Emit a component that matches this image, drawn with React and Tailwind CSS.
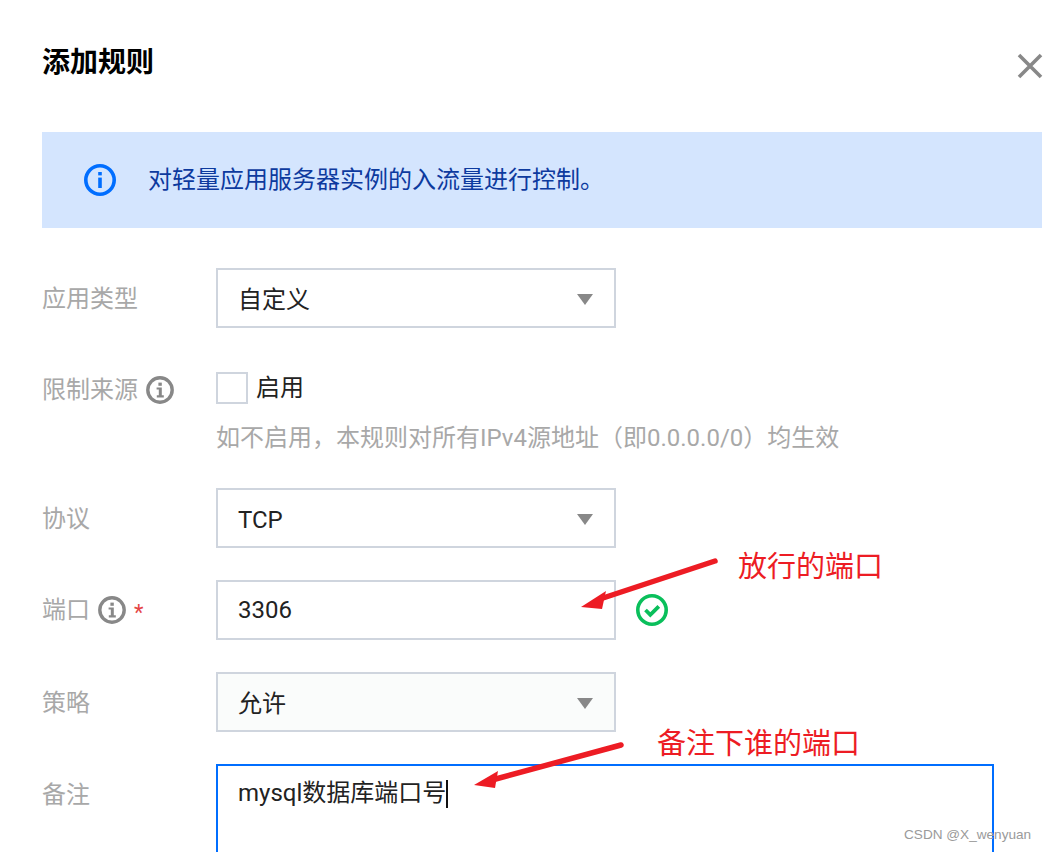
function Info({ className = "" }) {
  return (
    <svg viewBox="0 0 28 28" className={"w-7 h-7 shrink-0 " + className} fill="none">
      <circle cx="14" cy="14" r="12.2" stroke="#888888" strokeWidth="3.4" />
      <rect x="12.4" y="6.6" width="3.4" height="3.2" fill="#888888" />
      <path d="M10.6 11.4h5.2v7.8h2v2.2h-7v-2.2h2v-5.6h-2.2z" fill="#888888" />
    </svg>
  );
}
function Caret() {
  return (
    <svg viewBox="0 0 16 12" className="w-4 h-3 absolute right-[21px] top-[24px]">
      <path d="M0 0h16l-8 11z" fill="#888888" />
    </svg>
  );
}
function Label({ children }) {
  return <div className="w-[174px] shrink-0 flex items-center h-[60px] pt-[2px] text-[24px] leading-[36px] text-[#a8a8a8]">{children}</div>;
}
function Select({ children, bg = "bg-white" }) {
  return (
    <div className={"relative w-[400px] h-[60px] border-2 border-[#cfd5de] flex items-center pl-[20px] pt-[4px] text-[24px] text-[#222222] " + bg}>
      {children}
      <Caret />
    </div>
  );
}
export default function App() {
  return (
    <div className="relative w-[1046px] h-[852px] overflow-hidden bg-white font-['Roboto','Noto_Sans_CJK_SC',sans-serif]">
      <div className="pl-[42px] pt-[42px]">
        <div className="flex justify-between h-[90px]">
          <h1 className="text-[28px] leading-[42px] font-bold text-black">添加规则</h1>
          <svg viewBox="0 0 26 26" className="w-[26px] h-[26px] mt-[11px] mr-[3px]" stroke="#888888" strokeWidth="3.6" fill="none">
            <path d="M2 2l22 22M24 2L2 24" />
          </svg>
        </div>
        <div className="w-[1000px] h-[96px] bg-[#d4e5fe] flex items-center pl-[42px] gap-[32px] mb-[40px]">
          <svg viewBox="0 0 32 32" className="w-8 h-8 shrink-0" fill="none">
            <circle cx="16" cy="16" r="14.2" stroke="#006eff" strokeWidth="3.6" />
            <rect x="14.2" y="8" width="3.6" height="3.4" fill="#006eff" />
            <rect x="14.2" y="13.6" width="3.6" height="10.4" fill="#006eff" />
          </svg>
          <span className="text-[24px] leading-[36px] text-[#0d3a9e]">对轻量应用服务器实例的入流量进行控制。</span>
        </div>

        <div className="flex mb-[44px]">
          <Label>应用类型</Label>
          <Select>自定义</Select>
        </div>

        <div className="flex mb-[32px]">
          <div className="w-[174px] shrink-0 flex items-center h-[36px] gap-[8px] text-[24px] leading-[36px] text-[#a8a8a8]">
            限制来源<Info />
          </div>
          <div>
            <div className="flex items-center gap-[8px] h-[32px]">
              <div className="w-8 h-8 border-2 border-[#cfd5de] bg-white" />
              <span className="text-[24px] text-[#222222]">启用</span>
            </div>
            <div className="text-[24px] leading-[36px] text-[#a8a8a8] mt-[16px]">如不启用，本规则对所有IPv4源地址（即0.0.0.0/0）均生效</div>
          </div>
        </div>

        <div className="flex mb-[32px]">
          <Label>协议</Label>
          <Select>TCP</Select>
        </div>

        <div className="flex mb-[32px]">
          <div className="w-[174px] shrink-0 flex items-center h-[60px] text-[24px] text-[#a8a8a8] gap-[8px]">
            端口<Info />
            <span className="text-[#e54545] text-[22px] leading-[22px] mt-[6px]">*</span>
          </div>
          <div className="w-[400px] h-[60px] border-2 border-[#cfd5de] flex items-center pl-[20px] text-[24px] text-[#222222]">3306</div>
          <svg viewBox="0 0 32 32" className="w-8 h-8 ml-[20px] mt-[14px]" fill="none">
            <circle cx="16" cy="16" r="14.2" stroke="#0abf5b" strokeWidth="3.6" />
            <path d="M9.5 16l4.8 4.8 8.5-8.5" stroke="#0abf5b" strokeWidth="3.8" />
          </svg>
        </div>

        <div className="flex mb-[32px]">
          <Label>策略</Label>
          <Select bg="bg-[#fafcfb]">允许</Select>
        </div>

        <div className="flex">
          <Label>备注</Label>
          <div className="w-[778px] h-[120px] border-2 border-[#006eff] pl-[20px] pt-[9px] text-[24px] leading-[36px] text-[#222222] flex items-start">
            <span>mysql数据库端口号</span>
            <span className="w-[2px] h-[28px] bg-[#111111] mt-[5px]" />
          </div>
        </div>
      </div>

      <svg className="absolute left-0 top-0 pointer-events-none" width="1046" height="852" viewBox="0 0 1046 852" fill="none">
        <path d="M715 561L600 599" stroke="#ed1c24" strokeWidth="5.5" strokeLinecap="round" />
        <path d="M581 607L606 591L602 609z" fill="#ed1c24" />
        <path d="M621 745L492 780" stroke="#ed1c24" strokeWidth="5.5" strokeLinecap="round" />
        <path d="M474 785L498 771L495 788z" fill="#ed1c24" />
      </svg>
      <span className="absolute left-[738px] top-[548px] text-[29px] leading-[38px] text-[#ed1c24]">放行的端口</span>
      <span className="absolute left-[657px] top-[725px] text-[29px] leading-[38px] text-[#ed1c24]">备注下谁的端口</span>
      <span className="absolute left-[904px] top-[825px] text-[13.6px] leading-[20px] text-[#9a9a9a] font-['Liberation_Sans',sans-serif]">CSDN @X_wenyuan</span>
    </div>
  );
}
